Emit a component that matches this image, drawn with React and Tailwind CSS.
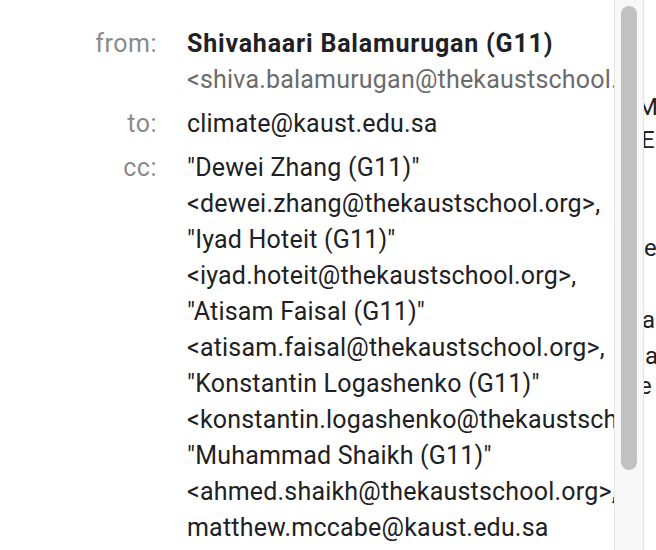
import React from 'react'

const font = { fontFamily: 'Roboto, "Open Sans", Arial, sans-serif' }

const rows = [
  {
    label: 'from:',
    lines: [
      { text: 'Shivahaari Balamurugan (G11)', cls: 'font-bold tracking-[0.8px] text-[#202124]' },
      { text: '<shiva.balamurugan@thekaustschool.org>', cls: 'tracking-[0.2px] text-[#6b6b6b]' },
    ],
  },
  { label: 'to:', lines: [{ text: 'climate@kaust.edu.sa', cls: 'tracking-[0.2px] text-[#202124]' }] },
  {
    label: 'cc:',
    lines: [
      '"Dewei Zhang (G11)"',
      '<dewei.zhang@thekaustschool.org>,',
      '"Iyad Hoteit (G11)"',
      '<iyad.hoteit@thekaustschool.org>,',
      '"Atisam Faisal (G11)"',
      '<atisam.faisal@thekaustschool.org>,',
      '"Konstantin Logashenko (G11)"',
      '<konstantin.logashenko@thekaustschool.org>,',
      '"Muhammad Shaikh (G11)"',
      '<ahmed.shaikh@thekaustschool.org>,',
      'matthew.mccabe@kaust.edu.sa',
    ].map((t) => ({ text: t, cls: 'tracking-[0.2px] text-[#202124]' })),
  },
]

// bits of the page behind the popup, clipped at the right edge
const behind = [
  { top: 'mt-[89px]', text: 'MA', cls: '-ml-[7px]' },
  { top: 'mt-[-3px]', text: 'E', cls: '-ml-[3px]' },
  { top: 'mt-[72px]', text: 'e', cls: 'ml-0' },
  { top: 'mt-[36px]', text: 'al', cls: '-ml-[2px]' },
  { top: 'mt-0', text: 'a', cls: 'ml-[1px]' },
  { top: 'mt-[-6px]', text: 'e', cls: '-ml-[5px]' },
]

export default function App() {
  return (
    <div className="flex h-[550px] w-[656px] overflow-hidden bg-white" style={font}>
      <div className="flex w-[614px] shrink-0 flex-col gap-[8px] overflow-hidden pt-[26px]">
        {rows.map((row) => (
          <div key={row.label} className="flex">
            <div className="w-[157px] shrink-0 text-right text-[25px] leading-[36px] tracking-[0.5px] text-[#8a8a8a]">
              {row.label}
            </div>
            <div className="ml-[30px] flex flex-col">
              {row.lines.map((l) => (
                <div key={l.text} className={`whitespace-nowrap text-[25px] leading-[36px] ${l.cls}`}>
                  {l.text}
                </div>
              ))}
            </div>
          </div>
        ))}
      </div>

      <div className="flex w-[30px] shrink-0 justify-center border-l border-r border-[#e4e4e4] bg-[#f8f8f8] pt-[6px]">
        <div className="h-[464px] w-[16px] rounded-full bg-[#c1c1c1]" />
      </div>

      <div className="flex flex-1 flex-col overflow-hidden text-[24px] leading-[36px] text-[#202124]">
        {behind.map((b, i) => (
          <div key={i} className={`${b.top} ${b.cls} whitespace-nowrap`}>
            {b.text}
          </div>
        ))}
      </div>
    </div>
  )
}
